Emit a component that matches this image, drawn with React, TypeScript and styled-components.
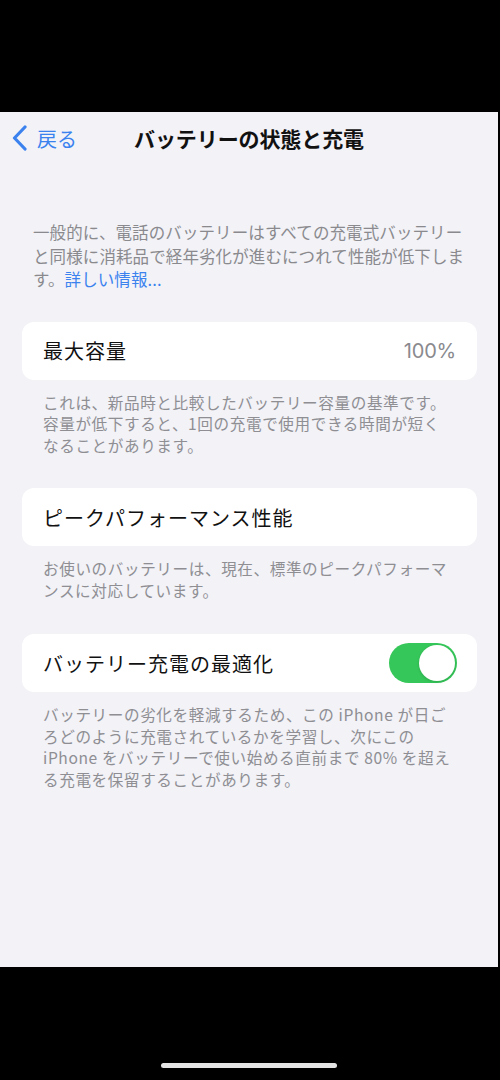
import React from "react";
import styled, { createGlobalStyle } from "styled-components";

const Global = createGlobalStyle`
  html, body { margin: 0; padding: 0; background: #000; }
  body { font-family: "Noto Sans CJK JP", "Noto Sans", sans-serif; -webkit-font-smoothing: antialiased; }
`;

const Screen = styled.div`
  width: 500px;
  height: 1080px;
  display: flex;
  flex-direction: column;
  background: #000;
  box-sizing: border-box;
  padding-right: 2px;
`;

const TopBar = styled.div`
  height: 112px;
  flex-shrink: 0;
  background: #000;
`;

const Content = styled.div`
  flex: 1;
  background: #f2f2f7;
  display: flex;
  flex-direction: column;
`;

const NavBar = styled.div`
  height: 52px;
  display: grid;
  grid-template-columns: 1fr auto 1fr;
  align-items: center;
`;

const Back = styled.div`
  display: flex;
  align-items: center;
  gap: 9px;
  padding-left: 12px;
  color: #3b82ef;
  font-size: 20px;
  letter-spacing: 0px;
`;

const Title = styled.div`
  font-size: 21px;
  font-weight: 700;
  color: #111;
  letter-spacing: -0.1px;
`;

const Intro = styled.p`
  margin: 57px 0 0;
  padding: 0 28px 0 33px;
  font-size: 16.5px;
  line-height: 23.5px;
  color: #8a8a8e;
  letter-spacing: 0.1px;
`;

const Link = styled.span`
  color: #3b82ef;
`;

const Card = styled.div<{ $top: number }>`
  margin: ${(p) => p.$top}px 21px 0 22px;
  height: 58px;
  background: #fff;
  border-radius: 12px;
  display: flex;
  align-items: center;
  justify-content: space-between;
  padding: 0 21px 0 21px;
  box-sizing: border-box;
`;

const Label = styled.span`
  font-size: 20px;
  color: #111;
  letter-spacing: 1px;
`;

const Value = styled.span`
  font-size: 20px;
  color: #8a8a8e;
  font-family: "Inter", "Noto Sans", sans-serif;
  letter-spacing: -0.2px;
`;

const Footer = styled.p`
  margin: 12px 0 0;
  padding: 0 20px 0 43px;
  font-size: 15.6px;
  line-height: 21.5px;
  color: #8e8e93;
  letter-spacing: 0.6px;
`;

const Toggle = styled.div<{ $on: boolean }>`
  width: 68px;
  height: 40px;
  border-radius: 20px;
  background: ${(p) => (p.$on ? "#35c759" : "#e9e9eb")};
  display: flex;
  align-items: center;
  justify-content: ${(p) => (p.$on ? "flex-end" : "flex-start")};
  padding: 2px;
  box-sizing: border-box;
  margin-right: -1px;
`;

const Knob = styled.div`
  width: 36px;
  height: 36px;
  border-radius: 50%;
  background: #fff;
  box-shadow: 0 1px 3px rgba(0, 0, 0, 0.15);
`;

const BottomBar = styled.div`
  height: 113px;
  flex-shrink: 0;
  background: #000;
  display: flex;
  justify-content: center;
  align-items: flex-end;
  padding-bottom: 12px;
  box-sizing: border-box;
`;

const HomeIndicator = styled.div`
  width: 176px;
  height: 5px;
  border-radius: 3px;
  background: #e4e4e4;
`;

const Chevron = () => (
  <svg width="16" height="26" viewBox="0 0 16 26">
    <path
      d="M13 2 L2.5 13 L13 24"
      fill="none"
      stroke="#3b82ef"
      strokeWidth="3.2"
      strokeLinecap="round"
      strokeLinejoin="round"
    />
  </svg>
);

export default function App() {
  return (
    <>
      <Global />
      <Screen>
        <TopBar />
        <Content>
          <NavBar>
            <Back>
              <Chevron />
              <span>戻る</span>
            </Back>
            <Title>バッテリーの状態と充電</Title>
            <div />
          </NavBar>
          <Intro>
            一般的に、電話のバッテリーはすべての充電式バッテリー
            <br />
            と同様に消耗品で経年劣化が進むにつれて性能が低下しま
            <br />
            す。<Link>詳しい情報...</Link>
          </Intro>
          <Card $top={30}>
            <Label>最大容量</Label>
            <Value>100%</Value>
          </Card>
          <Footer>
            これは、新品時と比較したバッテリー容量の基準です。
            <br />
            容量が低下すると、1回の充電で使用できる時間が短く
            <br />
            なることがあります。
          </Footer>
          <Card $top={32}>
            <Label>ピークパフォーマンス性能</Label>
          </Card>
          <Footer>
            お使いのバッテリーは、現在、標準のピークパフォーマ
            <br />
            ンスに対応しています。
          </Footer>
          <Card $top={33}>
            <Label>バッテリー充電の最適化</Label>
            <Toggle $on>
              <Knob />
            </Toggle>
          </Card>
          <Footer>
            バッテリーの劣化を軽減するため、この iPhone が日ご
            <br />
            ろどのように充電されているかを学習し、次にこの
            <br />
            iPhone をバッテリーで使い始める直前まで 80% を超え
            <br />
            る充電を保留することがあります。
          </Footer>
        </Content>
        <BottomBar>
          <HomeIndicator />
        </BottomBar>
      </Screen>
    </>
  );
}
